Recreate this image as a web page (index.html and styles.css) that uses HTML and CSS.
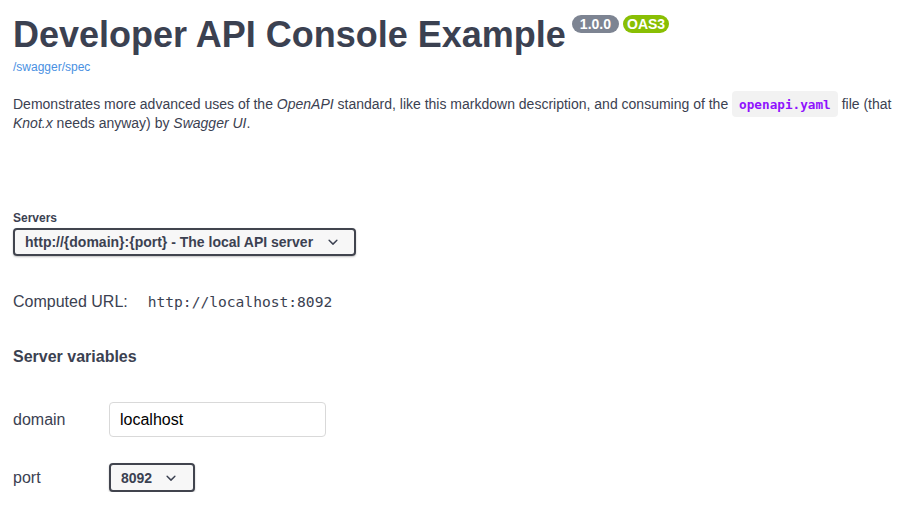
FILE: index.html
```html
<!DOCTYPE html>
<html lang="en">
<head>
<meta charset="utf-8">
<title>Developer API Console Example</title>
<link rel="stylesheet" href="styles.css">
</head>
<body>
<div class="wrap">
  <div class="info">
    <h2 class="title">Developer API Console Example<span class="badges"><span class="badge badge-version">1.0.0</span><span class="badge badge-oas">OAS3</span></span></h2>
    <a class="spec-link" href="#">/swagger/spec</a>
    <p class="desc">Demonstrates more advanced uses of the <em>OpenAPI</em> standard, like this markdown description, and consuming of the <code class="code">openapi.yaml</code> file (that <em>Knot.x</em> needs anyway) by <em>Swagger UI</em>.</p>
  </div>

  <div class="servers">
    <label class="servers-label">Servers</label>
    <div class="select-wrap select-server">
      <select class="select">
        <option>http://{domain}:{port} - The local API server</option>
      </select>
      <svg class="chev" viewBox="0 0 20 20" width="20" height="20"><path d="M13.418 7.859a.695.695 0 01.978 0 .68.68 0 010 .969l-3.908 3.83a.697.697 0 01-.979 0l-3.908-3.83a.68.68 0 010-.969.695.695 0 01.978 0L10 11l3.418-3.141z" fill="#3b4151"/></svg>
    </div>

    <div class="computed">
      <span class="computed-label">Computed URL:</span>
      <code class="computed-url">http://localhost:8092</code>
    </div>

    <h4 class="vars-title">Server variables</h4>

    <div class="vars">
      <div class="var-row">
        <span class="var-name">domain</span>
        <input class="var-input" type="text" value="localhost">
      </div>
      <div class="var-row">
        <span class="var-name">port</span>
        <div class="select-wrap select-port">
          <select class="select">
            <option>8092</option>
          </select>
          <svg class="chev" viewBox="0 0 20 20" width="20" height="20"><path d="M13.418 7.859a.695.695 0 01.978 0 .68.68 0 010 .969l-3.908 3.83a.697.697 0 01-.979 0l-3.908-3.83a.68.68 0 010-.969.695.695 0 01.978 0L10 11l3.418-3.141z" fill="#3b4151"/></svg>
        </div>
      </div>
    </div>
  </div>
</div>
</body>
</html>
```

FILE: styles.css
```css
html, body {
  margin: 0;
  padding: 0;
  background: #ffffff;
}

body {
  font-family: "Liberation Sans", Arial, sans-serif;
  color: #3b4151;
}

.wrap {
  padding: 0 14px 0 13px;
}

.info {
  padding-top: 14px;
}

.title {
  margin: 0;
  font-size: 36px;
  font-weight: 700;
  line-height: 42px;
  color: #3b4151;
  white-space: nowrap;
}

.badges {
  display: inline-flex;
  gap: 4px;
  vertical-align: top;
  position: relative;
  top: 1px;
  margin-left: 6px;
}

.badge {
  display: inline-block;
  font-size: 14px;
  line-height: 18px;
  font-weight: 700;
  color: #ffffff;
  border-radius: 57px;
}

.badge-version {
  background: #7d8492;
  padding: 0 8px;
}

.badge-oas {
  background: #89bf04;
  padding: 0 4px;
}

.spec-link {
  display: block;
  margin-top: 4px;
  font-size: 12px;
  line-height: 14px;
  color: #4990e2;
  text-decoration: none;
}

.desc {
  margin: 21px 0 0;
  font-size: 14px;
  line-height: 18px;
  color: #3b4151;
}

.code {
  font-family: "DejaVu Sans Mono", "Liberation Mono", monospace;
  font-size: 12.7px;
  font-weight: 700;
  color: #9012fe;
  background: rgba(0, 0, 0, 0.05);
  border-radius: 4px;
  padding: 6px 7px 5px;
}

.servers {
  margin-top: 79px;
}

.servers-label {
  display: block;
  font-size: 12px;
  line-height: 14px;
  font-weight: 700;
  margin-bottom: 3px;
}

.select-wrap {
  position: relative;
  display: inline-block;
}

.select {
  appearance: none;
  -webkit-appearance: none;
  font-family: "Liberation Sans", Arial, sans-serif;
  font-size: 14px;
  font-weight: 700;
  color: #3b4151;
  background: #f7f7f7;
  border: 2px solid #41444e;
  border-radius: 4px;
  box-shadow: 0 1px 2px 0 rgba(0, 0, 0, 0.25);
  margin: 0;
  outline: none;
}

.select-server .select {
  width: 343px;
  height: 28px;
  padding: 0 40px 0 10px;
}

.select-port .select {
  width: 86px;
  height: 29px;
  padding: 0 30px 0 10px;
}

.chev {
  position: absolute;
  top: 50%;
  margin-top: -10px;
  pointer-events: none;
}

.select-server .chev {
  right: 13px;
}

.select-port .chev {
  right: 14px;
}

.computed {
  display: flex;
  align-items: baseline;
  gap: 20px;
  margin-top: 37px;
}

.computed-label {
  font-size: 16px;
  line-height: 18px;
}

.computed-url {
  font-family: "DejaVu Sans Mono", "Liberation Mono", monospace;
  font-size: 14.6px;
  line-height: 18px;
}

.vars-title {
  margin: 36px 0 0;
  font-size: 16px;
  line-height: 20px;
  font-weight: 700;
}

.vars {
  margin-top: 35px;
  display: flex;
  flex-direction: column;
  gap: 26px;
}

.var-row {
  display: flex;
  align-items: center;
}

.var-name {
  width: 96px;
  font-size: 16px;
}

.var-input {
  box-sizing: border-box;
  width: 217px;
  height: 35px;
  border: 1px solid #d9d9d9;
  border-radius: 4px;
  padding: 0 10px;
  font-family: "Liberation Sans", Arial, sans-serif;
  font-size: 16px;
  color: #000000;
  background: #ffffff;
  margin: 0;
  outline: none;
}
```
